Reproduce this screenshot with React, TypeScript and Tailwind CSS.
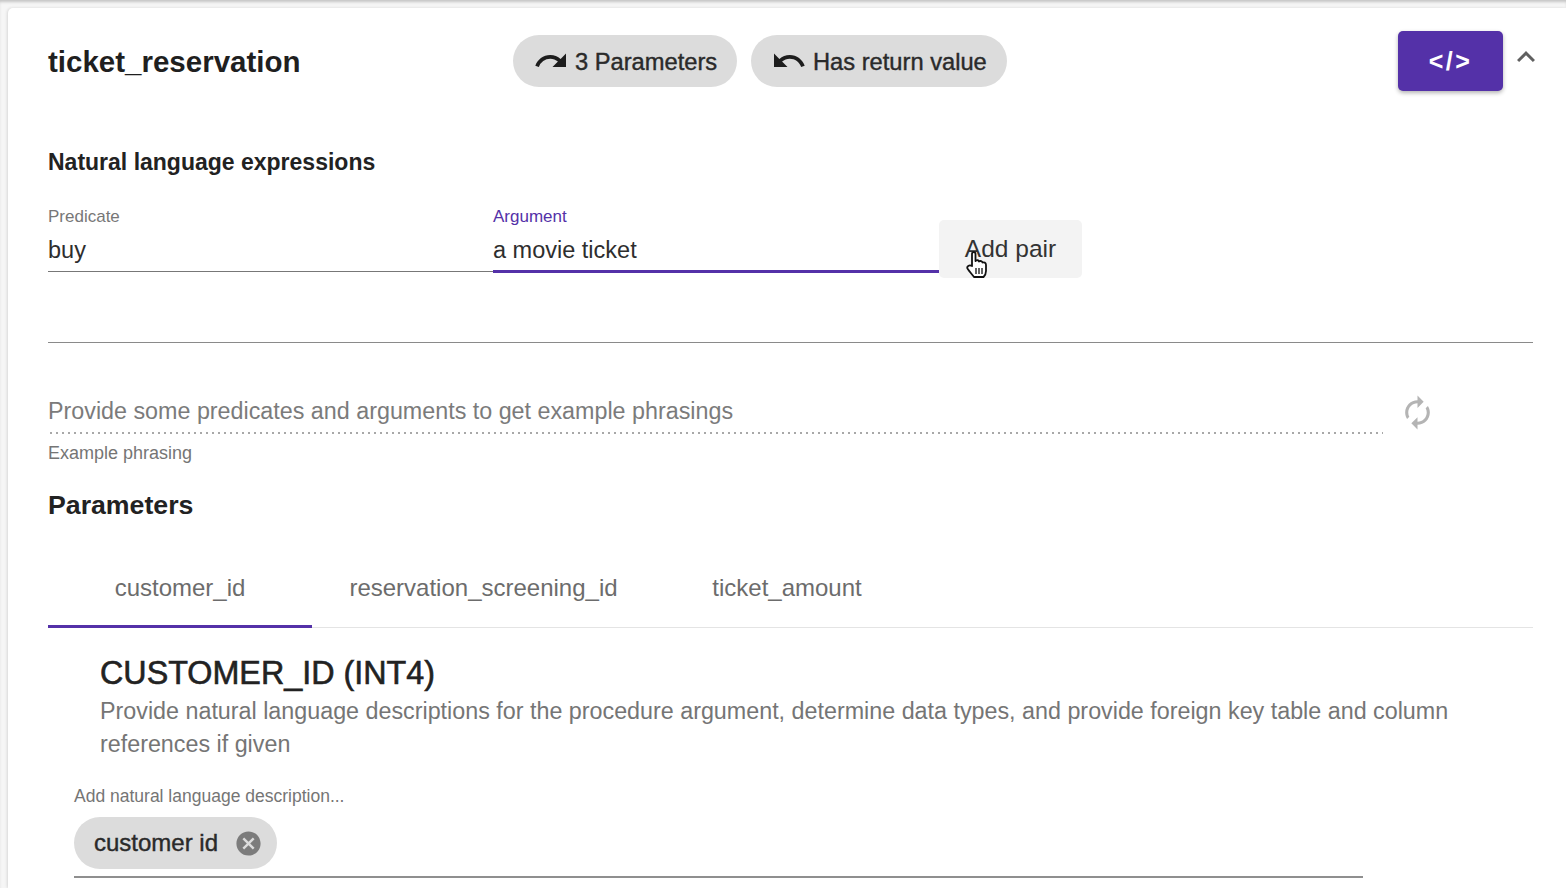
import { MdAutorenew, MdCancel, MdExpandLess, MdRedo, MdUndo } from 'react-icons/md';

function Chip({ icon, label, width }: { icon: React.ReactNode; label: string; width: string }) {
  return (
    <div className={`flex items-center h-[52px] rounded-full bg-[#dcdcdc] text-[23.7px] text-[#2a2a2a] [-webkit-text-stroke:0.4px] ${width}`}>
      {icon}
      <span className="pt-[5px]">{label}</span>
    </div>
  );
}

function Cursor() {
  return (
    <svg className="absolute left-[26px] top-[29px]" width="24" height="30" viewBox="0 0 24 30">
      <path
        d="M7 17 L7 5 C7 2.5 10.5 2.5 10.5 5 L10.5 12 C12 10.8 13.5 11 14 12.5 C15.5 11.5 17 12 17.5 13.5 C19 13 21 13.5 21 16 L21 22 C21 25 19.5 27 18.5 28 L9 28 C7.5 26 4 22 2.5 19.5 C1.5 17.5 4 15.5 7 17 Z"
        fill="#fff"
        stroke="#111"
        strokeWidth="1.8"
        strokeLinejoin="round"
      />
      <path d="M11 19 L11 25 M14 19 L14 25 M17 19 L17 25" stroke="#111" strokeWidth="1.3" />
    </svg>
  );
}

export default function App() {
  return (
    <div className="h-[888px] w-[1566px] overflow-hidden bg-[#f6f6f6] font-['Liberation_Sans',Arial,sans-serif] shadow-[inset_0_3px_3px_-1px_#c4c4c4] pt-[8px] pl-[8px]">
      <div className="h-[880px] bg-white rounded-tl-[5px] shadow-[-1px_0_3px_rgba(0,0,0,0.12)] pl-[40px] pr-[33px]">
        <div className="relative flex items-center h-[108px]">
          <h1 className="w-[465px] text-[29.5px] font-bold text-[#1f1f1f]">ticket_reservation</h1>
          <div className="flex gap-[14px] -mt-[3px]">
            <Chip width="w-[224px]" icon={<MdRedo className="ml-[20px] mr-[6px] text-[36px] text-[#1d1d1d]" />} label="3 Parameters" />
            <Chip width="w-[256px]" icon={<MdUndo className="ml-[20px] mr-[6px] text-[36px] text-[#1d1d1d]" />} label="Has return value" />
          </div>
          <button className="ml-auto mr-[30px] -mt-[2px] pt-[2px] flex items-center justify-center w-[105px] h-[60px] rounded-[5px] bg-[#5431a8] text-white text-[25px] font-bold tracking-[2.5px] shadow-[0_2px_4px_rgba(0,0,0,0.3)]">
            {'</>'}
          </button>
          <MdExpandLess className="absolute right-[-11px] top-[31px] text-[36px] text-[#606060]" />
        </div>

        <h2 className="mt-[34px] text-[23px] leading-[24px] font-bold text-[#222]">Natural language expressions</h2>

        <div className="flex mt-[34px] h-[70px]">
          <div className="w-[445px] h-[64px] border-b border-[#777]">
            <div className="text-[17px] leading-[18px] text-[#777]">Predicate</div>
            <div className="mt-[10px] text-[23.5px] leading-[28px] text-[#2e2e2e]">buy</div>
          </div>
          <div className="w-[446px] h-[65px] border-b-[3px] border-[#5431a8]">
            <div className="text-[17px] leading-[18px] text-[#5431a8]">Argument</div>
            <div className="mt-[10px] text-[23.5px] leading-[28px] text-[#2e2e2e]">a movie ticket</div>
          </div>
          <button className="relative mt-[12px] w-[143px] h-[58px] rounded-[5px] bg-[#f3f3f3] text-[24.5px] text-[#333]">
            Add pair
            <Cursor />
          </button>
        </div>

        <div className="mt-[64px] border-t border-[#8a8a8a]" />

        <div className="flex mt-[51px] h-[40px]">
          <div className="w-[1335px] h-[40px]">
            <div className="h-[38px] text-[23.3px] leading-[32px] text-[#7b7b7b] pt-[1px]">
              Provide some predicates and arguments to get example phrasings
            </div>
            <div className="h-[2px] bg-[radial-gradient(circle,#a8a8a8_1px,transparent_1px)] bg-[length:6px_2px]" />
          </div>
          <MdAutorenew className="ml-[16px] text-[37px] text-[#b4b4b4]" />
        </div>
        <div className="mt-[8px] text-[18px] leading-[22px] text-[#757575]">Example phrasing</div>

        <h2 className="mt-[25px] text-[26.7px] leading-[32px] font-bold text-[#222]">Parameters</h2>

        <div className="flex mt-[26px] h-[81px] border-b border-[#e4e4e4] text-[24px] text-[#6c6c6c]">
          <div className="flex justify-center w-[264px] h-[81px] pt-[23px] border-b-[3px] border-[#5431a8]">customer_id</div>
          <div className="flex justify-center w-[343px] pt-[23px]">reservation_screening_id</div>
          <div className="flex justify-center w-[264px] pt-[23px]">ticket_amount</div>
        </div>

        <div className="pl-[52px]">
          <h3 className="mt-[26px] text-[32.3px] leading-[38px] text-[#222] [-webkit-text-stroke:0.6px]">CUSTOMER_ID (INT4)</h3>
          <p className="mt-[3px] w-[1380px] text-[23.3px] leading-[33px] text-[#757575]">
            Provide natural language descriptions for the procedure argument, determine data types, and provide foreign key table and column references if given
          </p>
        </div>

        <div className="pl-[26px]">
          <div className="mt-[25px] text-[17.5px] leading-[20px] text-[#757575]">Add natural language description...</div>
          <div className="mt-[11px] w-[1289px] h-[61px] border-b-2 border-[#8f8f8f]">
            <div className="inline-flex items-center w-[203px] h-[52px] rounded-full bg-[#dcdcdc] pl-[20px] text-[24px] text-[#2a2a2a] [-webkit-text-stroke:0.4px]">
              customer id
              <MdCancel className="ml-[16px] text-[29px] text-[#7c7c7c]" />
            </div>
          </div>
        </div>
      </div>
    </div>
  );
}
